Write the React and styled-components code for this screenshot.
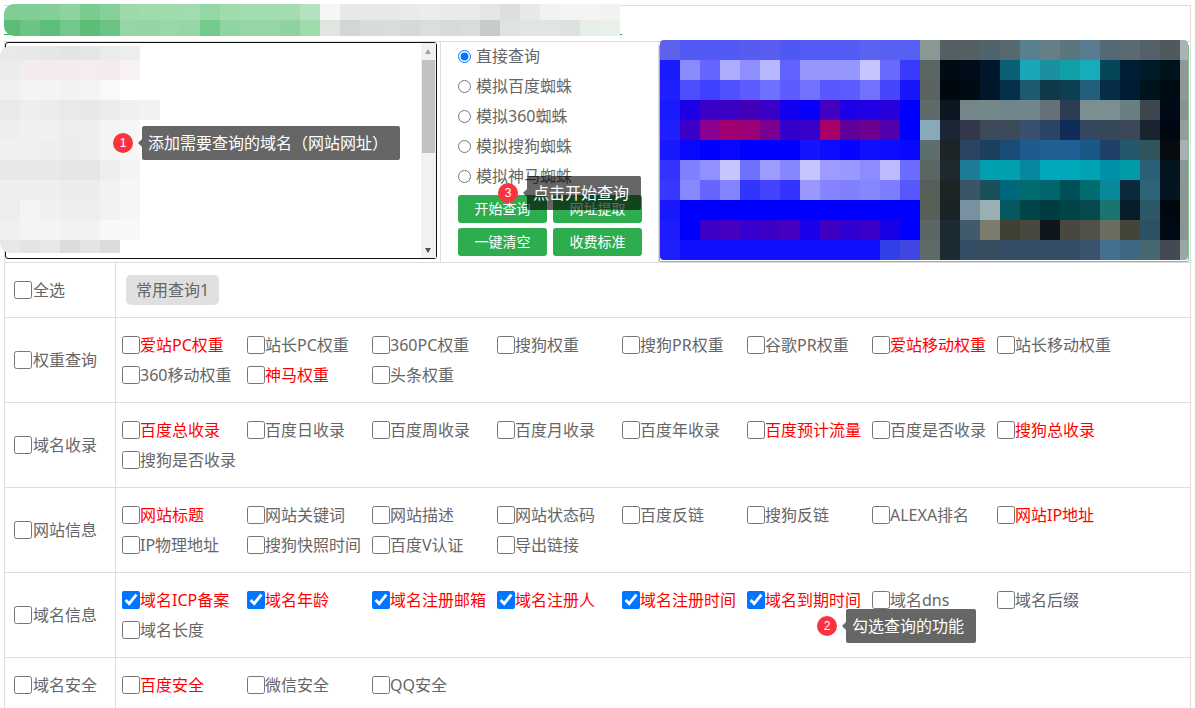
import React from 'react';
import styled, { createGlobalStyle } from 'styled-components';

const GlobalStyle = createGlobalStyle`
    html, body {
        margin: 0;
        height: 100%;
        overflow: hidden;
        background: #fff;
    }
    body {
        font-family: "Noto Sans", "Noto Sans CJK SC", sans-serif;
        font-size: 16px;
        color: #666;
    }
`;

const titleCells = [
    '80cc94 82cd96 84ce98 8ed2a0 7acb90 86cf98 9cd9ab a0dbae a0dbae a2dbb0 94d6a6 a0dbae a2dcb0 a2dcb0 a2dcb0 b4e2c0 f6f6f6 e8e8e8 e8e8e8 e8e8e8 eaeaea ececec eaeaea eaeaea e6e6e6 dedede e8e8e8 f2f2f2 f4f4f4 f4f4f4 f2f2f2',
    '5cbc74 6cc384 5cbe78 72c78a 5cbd76 6cc384 96d6a6 94d5a4 98d7a8 96d6a6 74c98c 90d4a2 96d6a6 96d6a6 8ed2a0 a0dbae dfe6e0 d2d6d4 d8dcd8 d8dcda d4dad6 dadfdc d6dad8 d8dcda c8ccc8 dee2e0 e0e4e2 e0e4e2 dde2de e6eee8 e8f0ea',
];

const domainCells = [
    'e9e9e9 e8e8e8 e6e6e6 e4e4e4 e6e6e6 ebebeb ededed',
    'ececec f4ecec f4ecec f4ecec f5eded f4ecec f8f2f2',
    'f0f0f0 f4f4f4 f4f4f4 f2f2f2 f4f4f4 f9f9f9 ffffff',
    'e9e9e9 eeeeee ececec e9e9e9 e8e8e8 ebebeb f0f0f0 f2f2f2',
    'eeeeee f0f0f0 f0f0f0 ededed eeeeee f4f4f4 f6f6f6',
    'f0f0f0 f0f0f0 eeeeee ececec eeeeee f4f4f4 f6f6f6',
    'e8e8e8 e8e8e8 e8e8e8 e6e6e6 e6e6e6 eeeeee f4f4f4',
    'eeeeee eeeeee eeeeee ececec ececec f2f2f2 f6f6f6',
    'ededed f4f4f4 f0f0f0 eeeeee eeeeee f2f2f2 f6f6f6',
    'f0f0f0 f4f4f4 f4f4f4 f2f2f2 f2f2f2 f8f8f8 f8f8f8',
    'e8e8e8 e4e4e4 e8e8e8 dcdcdc e4e4e4 dcdcdc ffffff',
];

const bannerCells = [
    '5c62ec 525af6 525af6 525af6 565cf2 5a5ef0 4f58f4 545cf6 545cf6 545cf6 5a62f2 5660f2 5660f2 8a9894 566064 566064 50646c 566a70 5a8090 667e88 5c7680 5a7c90 546a74 5a6a72 54606a 505a5c aab2b2',
    '1a1aff 8a8aff 6666ff acacff 8e8eff b8b8ff 6262ff 9696ff 9696ff 9696ff c6c6ff 6a6aff 3a3aff 5a6662 000c14 000c18 00182a 0a6074 1aa8b8 1a90a0 10a0a8 16acbc 064658 001e34 001a28 00141e 929898',
    '2020ff 4e4eff 4040ff 5050ff 5c5cff 7070ff 5c5cff 7272ff 5858ff 5c5cff 7272ff 4646ff 1616f8 5a6460 000810 000c14 00182a 04304a 1e5a70 0e3a4a 0e4054 22607c 062e48 001c34 00141e 000c14 909696',
    '1a1aff 1c00e8 3a00c8 3c00c4 4400b8 3a00c8 1400f0 0800f8 4400c0 1c00e8 2000e4 2800dc 0000ff 606a6a 0a1620 74868a 74888a 70868a 70868a 667278 2c3c54 7a9090 7a9090 688084 404650 000a18 8c9292',
    '2020ff 3c00c8 8c0090 a00070 9c0076 7c0090 3400cc 3800c8 a80068 600098 6c0090 5000ac 0000ff 88aab8 1a2634 32384a 3c4a5a 3c4a5a 3a5070 2c4468 102c58 364860 344858 3c4858 182430 000814 969c9c',
    '1818ff 0808ff 0000ff 0808ff 0000ff 0000ff 0000ff 1414ff 0c0cff 0404ff 1010ff 0c0cff 0808ff 5e6e6c 1c2428 2c4464 1c4060 1a4c78 1e5c90 1e6094 1e6094 1a5888 204068 24586c 30545c 080c10 a8b0b4',
    '3434ff 8080ff 9090ff c6c6ff 7070ff 9c9cff 8686ff c6c6ff 9c9cff 9898ff 8c8cff bcbcff 6c6cff 5a6664 1c2a30 1e7c98 00a0b0 00a0b0 0888a0 00a8bc 00a8bc 00a4b4 0090a8 009ca8 2c6078 04141e 8c9696',
    '3838ff 8888ff 6666ff 8484ff 3434ff 4444ff 3434ff 9898ff 8484ff 8080ff 8686ff 7c7cff 5858ff 585e58 1c2424 3a5468 1a505c 00687c 006c70 00686c 005058 006c70 08889a 0a2a3c 2e6478 041420 8c9494',
    '1818ff 0000ff 0000ff 0000ff 0000ff 0000ff 0000ff 0000ff 0000ff 0000ff 0000ff 0000ff 0000ff 585e58 1a2424 78909f 98b0b4 065860 004448 003c40 004448 044a4e 1a7470 081c2c 2c5868 000a0e 8c9494',
    '1c1cff 0000ff 3c00c8 4800c0 3800d0 3c00c4 4800c0 1800e8 4000c4 3000d0 3800c8 1800e4 0000ff 5c6664 1c2a34 405c6a 7c7c6c 404034 48483e 0e161c 484840 50524a 6a6e60 444438 2e5064 000a14 8c9494',
    '2020ff 1010ff 1010ff 1010ff 1010ff 1010ff 1010ff 1010ff 1010ff 1010ff 1010ff 3040e8 4046e0 5e6a68 1c2a34 344c64 384c60 344c64 344c64 344c64 344c68 3a5470 447090 3c6884 486870 444a54 9aa6a4',
];

const groups = [
    {
        name: '权重查询',
        items: [
            { label: '爱站PC权重', hot: true }, { label: '站长PC权重' }, { label: '360PC权重' }, { label: '搜狗权重' },
            { label: '搜狗PR权重' }, { label: '谷歌PR权重' }, { label: '爱站移动权重', hot: true }, { label: '站长移动权重' },
            { label: '360移动权重' }, { label: '神马权重', hot: true }, { label: '头条权重' },
        ],
    },
    {
        name: '域名收录',
        items: [
            { label: '百度总收录', hot: true }, { label: '百度日收录' }, { label: '百度周收录' }, { label: '百度月收录' },
            { label: '百度年收录' }, { label: '百度预计流量', hot: true }, { label: '百度是否收录' }, { label: '搜狗总收录', hot: true },
            { label: '搜狗是否收录' },
        ],
    },
    {
        name: '网站信息',
        items: [
            { label: '网站标题', hot: true }, { label: '网站关键词' }, { label: '网站描述' }, { label: '网站状态码' },
            { label: '百度反链' }, { label: '搜狗反链' }, { label: 'ALEXA排名' }, { label: '网站IP地址', hot: true },
            { label: 'IP物理地址' }, { label: '搜狗快照时间' }, { label: '百度V认证' }, { label: '导出链接' },
        ],
    },
    {
        name: '域名信息',
        items: [
            { label: '域名ICP备案', hot: true, on: true }, { label: '域名年龄', hot: true, on: true },
            { label: '域名注册邮箱', hot: true, on: true }, { label: '域名注册人', hot: true, on: true },
            { label: '域名注册时间', hot: true, on: true }, { label: '域名到期时间', hot: true, on: true },
            { label: '域名dns' }, { label: '域名后缀' }, { label: '域名长度' },
        ],
    },
    {
        name: '域名安全',
        items: [{ label: '百度安全', hot: true }, { label: '微信安全' }, { label: 'QQ安全' }],
    },
];

const modes = ['直接查询', '模拟百度蜘蛛', '模拟360蜘蛛', '模拟搜狗蜘蛛', '模拟神马蜘蛛'];
const actions = ['开始查询', '网址提取', '一键清空', '收费标准'];

const Page = styled.div`
    position: relative;
    width: 1187px;
    margin: 5px 0 0 4px;
`;

const TitleRow = styled.div`
    height: 35px;
    border-top: 1px solid #ddd;
    border-right: 1px solid #ddd;
    border-bottom: 1px solid #ddd;
`;

const Title = styled.div`
    width: 618px;
    height: 30px;
    border-bottom: 1px solid #2ead4f;
`;

const MosaicSvg = styled.svg`
    display: block;
    flex: none;
    border-radius: ${(p) => p.$radius || 0};
`;

const TitleMosaic = styled(MosaicSvg)`
    margin-top: -2px;
`;

const DomainMosaic = styled(MosaicSvg)`
    position: absolute;
    left: -5px;
    top: 4px;
`;

const BannerMosaic = styled(MosaicSvg)`
    position: absolute;
    left: 1px;
    top: -2px;
`;

const TopRow = styled.div`
    display: grid;
    grid-template-columns: 436px 218px 1fr;
    height: 220px;
    border-left: 1px solid #ddd;
    border-right: 1px solid #ddd;
    border-bottom: 1px solid #ddd;
`;

const InputCell = styled.div`
    position: relative;
    padding-right: 3px;
    border-right: 1px solid #ddd;
`;

const TextBox = styled.div`
    display: flex;
    justify-content: flex-end;
    box-sizing: border-box;
    height: 217px;
    border: 1px solid #111;
    border-radius: 3px;
    background: #fff;
`;

const Scrollbar = styled.div`
    position: relative;
    width: 15px;
    background: #f1f1f1;
`;

const ScrollThumb = styled.div`
    position: absolute;
    left: 1px;
    right: 1px;
    top: 17px;
    height: 93px;
    background: #c1c1c1;
`;

const ScrollArrow = styled.div`
    position: absolute;
    left: 4px;
    ${(p) => (p.$down ? 'bottom: 5px;' : 'top: 6px;')}
    width: 0;
    height: 0;
    border-left: 3.5px solid transparent;
    border-right: 3.5px solid transparent;
    ${(p) => (p.$down ? 'border-top: 5px solid #505050;' : 'border-bottom: 5px solid #a3a3a3;')}
`;

const ModeCell = styled.div`
    display: flex;
    flex-direction: column;
    padding-left: 17px;
    border-right: 1px solid #ddd;
`;

const ModeList = styled.div`
    margin-top: -1px;
`;

const ModeRow = styled.label`
    display: flex;
    align-items: center;
    gap: 5px;
    height: 30px;
    line-height: 30px;
    white-space: nowrap;
`;

const Radio = styled.input`
    width: 13px;
    height: 13px;
    margin: 0;
`;

const ActionGrid = styled.div`
    display: grid;
    grid-template-columns: 89px 89px;
    grid-auto-rows: 28px;
    gap: 5px 6px;
    margin-top: 4px;
`;

const ActionButton = styled.button`
    padding: 0;
    border: 0;
    border-radius: 3px;
    background: #2ead4f;
    color: #fff;
    font: inherit;
    font-size: 14px;
    line-height: 28px;
`;

const BannerCell = styled.div`
    position: relative;
`;

const BannerFrame = styled.div`
    box-sizing: border-box;
    height: 218px;
    margin: 2px 1px 0 0;
    border: 1px solid #7cc48f;
    border-radius: 2px;
`;

const Row = styled.div`
    display: grid;
    grid-template-columns: 111px 1fr;
    border-left: 1px solid #ddd;
    border-right: 1px solid #ddd;
    border-bottom: 1px solid #ddd;
`;

const NameCell = styled.div`
    display: flex;
    align-items: center;
    gap: 1px;
    padding-left: 9px;
    border-right: 1px solid #ddd;
`;

const NameText = styled.span`
    margin-top: -2px;
`;

const OptionCell = styled.div`
    display: flex;
    flex-wrap: wrap;
    align-content: flex-start;
    padding: 12px 0 12px 6px;
`;

const Check = styled.input`
    flex: none;
    width: 18px;
    height: 18px;
    margin: 0;
`;

const Option = styled.label`
    display: flex;
    align-items: center;
    width: 125px;
    height: 30px;
    line-height: 30px;
    white-space: nowrap;
    color: ${(p) => (p.$hot ? '#f00' : '#666')};
`;

const PresetButton = styled.button`
    width: 93px;
    height: 30px;
    margin-left: 4px;
    padding: 0;
    border: 0;
    border-radius: 5px;
    background: #e0e0e0;
    color: #666;
    font: inherit;
    line-height: 30px;
`;

const Tip = styled.div`
    position: absolute;
    left: ${(p) => p.$x}px;
    top: ${(p) => p.$y}px;
    display: flex;
    align-items: center;
`;

const Badge = styled.span`
    width: 20px;
    height: 20px;
    margin-right: 9px;
    border-radius: 50%;
    background: #f9333f;
    color: #fff;
    font-family: "Liberation Sans", sans-serif;
    font-size: 12px;
    line-height: 20px;
    text-align: center;
`;

const TipBody = styled.div`
    position: relative;
    height: 34px;
    padding: 0 ${(p) => p.$pad}px 0 6px;
    border-radius: 2px;
    background: rgba(0, 0, 0, 0.6);
    color: #fff;
    line-height: 34px;
    white-space: nowrap;

    &::before {
        content: '';
        position: absolute;
        left: -4px;
        top: 13px;
        border-top: 4px solid transparent;
        border-bottom: 4px solid transparent;
        border-right: 4px solid rgba(0, 0, 0, 0.6);
    }
`;

const Mosaic = ({ as: Svg = MosaicSvg, cells, width, height, cellHeight = 20, offsetX = 0, offsetY = 0, radius }) => (
    <Svg
        $radius={radius}
        width={width}
        height={height}
        viewBox={`${offsetX} ${offsetY} ${width} ${height}`}
        shapeRendering="crispEdges"
    >
        {cells.map((row, y) =>
            row.split(' ').map((color, x) => (
                <rect key={`${x}-${y}`} x={x * 20} y={y * cellHeight} width="20" height={cellHeight} fill={`#${color}`} />
            ))
        )}
    </Svg>
);

const Hint = ({ x, y, step, pad = 12, children }) => (
    <Tip $x={x} $y={y}>
        <Badge>{step}</Badge>
        <TipBody $pad={pad}>{children}</TipBody>
    </Tip>
);

export default function App() {
    return (
        <Page>
            <GlobalStyle />
            <TitleRow>
                <Title>
                    <Mosaic
                        as={TitleMosaic}
                        cells={titleCells}
                        width={616}
                        height={32}
                        cellHeight={16}
                        offsetX={4}
                        radius="10px 0 0 10px"
                    />
                </Title>
            </TitleRow>

            <TopRow>
                <InputCell>
                    <TextBox>
                        <Scrollbar>
                            <ScrollArrow />
                            <ScrollThumb />
                            <ScrollArrow $down />
                        </Scrollbar>
                    </TextBox>
                    <Mosaic as={DomainMosaic} cells={domainCells} width={160} height={207} offsetY={6} radius="10px" />
                </InputCell>
                <ModeCell>
                    <ModeList>
                        {modes.map((mode, i) => (
                            <ModeRow key={mode}>
                                <Radio type="radio" name="mode" defaultChecked={i === 0} />
                                {mode}
                            </ModeRow>
                        ))}
                    </ModeList>
                    <ActionGrid>
                        {actions.map((action) => (
                            <ActionButton key={action}>{action}</ActionButton>
                        ))}
                    </ActionGrid>
                </ModeCell>
                <BannerCell>
                    <BannerFrame />
                    <Mosaic as={BannerMosaic} cells={bannerCells} width={528} height={220} radius="4px" />
                </BannerCell>
            </TopRow>

            <Row>
                <NameCell>
                    <Check type="checkbox" />
                    <NameText>全选</NameText>
                </NameCell>
                <OptionCell>
                    <PresetButton>常用查询1</PresetButton>
                </OptionCell>
            </Row>

            {groups.map((group) => (
                <Row key={group.name}>
                    <NameCell>
                        <Check type="checkbox" />
                        <NameText>{group.name}</NameText>
                    </NameCell>
                    <OptionCell>
                        {group.items.map((item) => (
                            <Option key={item.label} $hot={item.hot}>
                                <Check type="checkbox" defaultChecked={item.on} />
                                {item.label}
                            </Option>
                        ))}
                    </OptionCell>
                </Row>
            ))}

            <Hint x={109} y={121} step="1">添加需要查询的域名（网站网址）</Hint>
            <Hint x={494} y={171} step="3">点击开始查询</Hint>
            <Hint x={813} y={604} step="2">勾选查询的功能</Hint>
        </Page>
    );
}
